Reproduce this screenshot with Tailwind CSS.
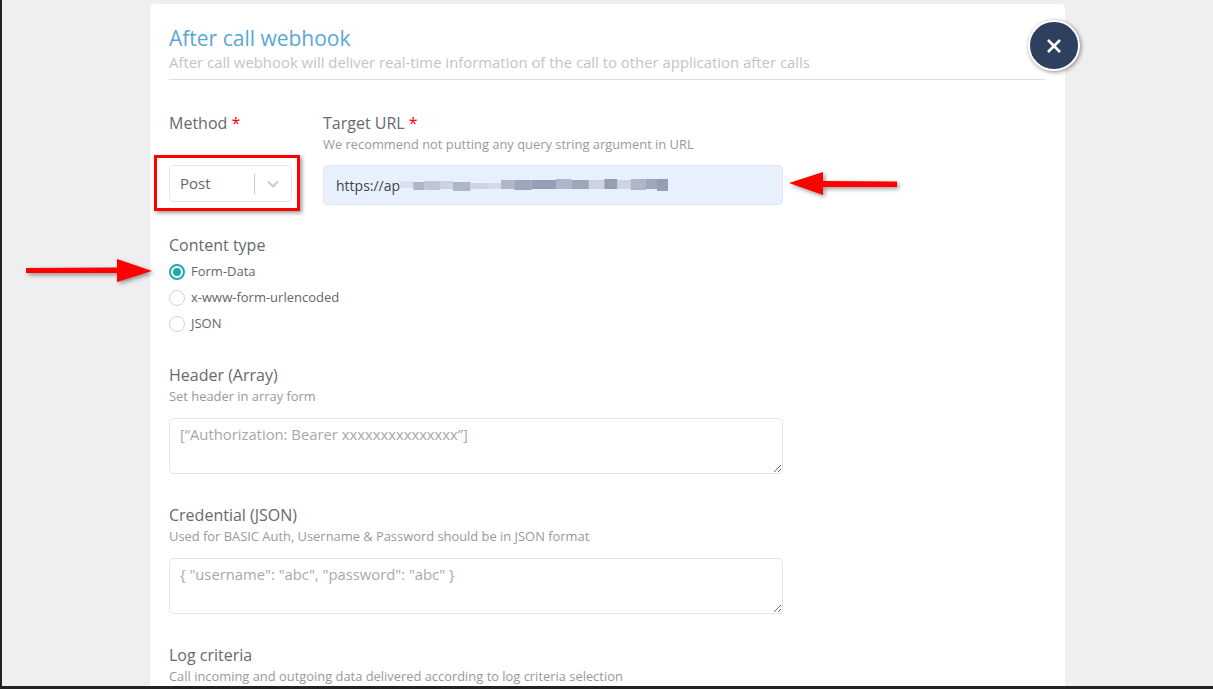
<!DOCTYPE html>
<html lang="en">
<head>
<meta charset="UTF-8">
<title>After call webhook</title>
<script src="https://cdn.jsdelivr.net/npm/@tailwindcss/browser@4"></script>
</head>
<body class="bg-[#efefef]">
<div class="relative h-[689px] w-[1213px] overflow-hidden border-b-[3px] border-l-2 border-[#222222] bg-[#efefef] font-['Open_Sans',sans-serif] text-[#676a6c]">

  <!-- modal -->
  <div class="ml-[148px] mt-1 h-[800px] w-[915px] rounded-t bg-white pl-[19px] pr-[20px] pt-[21px]">
    <h2 class="text-[21px] leading-[27px] text-[#5aa7d6]">After call webhook</h2>
    <p class="border-b border-[#e0e0e0] pb-[6px] text-[14.9px] leading-[21px] text-[#c4c4c4]">After call webhook will deliver real-time information of the call to other application after calls</p>

    <div class="mt-[32px] flex">
      <div class="w-[154px]">
        <div class="text-[16px] leading-[22px]">Method <span class="text-[#f00]">*</span></div>
        <div class="mt-[31px] flex h-[37px] w-[123px] items-center rounded border border-[#e6e6e6] pl-[10px] text-[15px] text-[#666666]">
          <span class="flex-1">Post</span>
          <span class="h-[20px] w-px bg-[#cccccc]"></span>
          <svg class="mx-[11px] h-[14px] w-[14px] text-[#cccccc]" viewBox="0 0 14 14" fill="none" stroke="currentColor" stroke-width="2"><path d="M2 4.5l5 5 5-5"/></svg>
        </div>
      </div>
      <div>
        <div class="text-[16px] leading-[22px]">Target URL <span class="text-[#f00]">*</span></div>
        <div class="text-[12.9px] leading-[21px] text-[#999999]">We recommend not putting any query string argument in URL</div>
        <div class="mt-[10px] flex h-[40px] w-[460px] items-center rounded border border-[#dfe6f2] bg-[#e8f0fe] pl-[12px] text-[14px] text-[#444444]">
          <span>https://ap</span>
          <svg class="h-[16px] w-[268px] shrink-0 opacity-80 blur-[0.6px]" viewBox="0 0 244 16" preserveAspectRatio="none">
            <g fill="#9fa9bb">
              <rect x="0" y="4" width="12" height="7" fill="#d8dde6"/><rect x="12" y="5" width="10" height="8"/><rect x="22" y="4" width="15" height="9" fill="#b4bccb"/><rect x="37" y="4" width="11" height="8" fill="#c7cedb"/><rect x="48" y="5" width="16" height="9"/><rect x="64" y="6" width="16" height="6" fill="#c7cedb"/><rect x="80" y="6" width="12" height="6" fill="#d0d6e1"/><rect x="92" y="3" width="12" height="9"/><rect x="104" y="3" width="16" height="10" fill="#8b96aa"/><rect x="120" y="3" width="22" height="9" fill="#7f8ba1"/><rect x="142" y="2" width="14" height="10"/><rect x="156" y="3" width="16" height="9" fill="#8b96aa"/><rect x="172" y="3" width="14" height="9" fill="#c7cedb"/><rect x="186" y="2" width="12" height="10" fill="#7f8ba1"/><rect x="198" y="3" width="12" height="9" fill="#c7cedb"/><rect x="210" y="2" width="14" height="11"/><rect x="224" y="2" width="10" height="10" fill="#8b96aa"/><rect x="234" y="2" width="10" height="12" fill="#7f8ba1"/>
            </g>
          </svg>
        </div>
      </div>
    </div>

    <div class="mt-[29px] text-[16px] leading-[22px]">Content type</div>
    <div class="mt-[6px] flex flex-col gap-[6px] text-[13px] text-[#666666]">
      <label class="flex h-[20px] items-center gap-[6px]">
        <span class="flex h-[16px] w-[16px] items-center justify-center rounded-full border-2 border-[#1ea7b5]"><span class="h-[8px] w-[8px] rounded-full bg-[#1ea7b5]"></span></span>Form-Data
      </label>
      <label class="flex h-[20px] items-center gap-[6px]"><span class="h-[16px] w-[16px] rounded-full border border-[#d4d4d4]"></span>x-www-form-urlencoded</label>
      <label class="flex h-[20px] items-center gap-[6px]"><span class="h-[16px] w-[16px] rounded-full border border-[#d4d4d4]"></span>JSON</label>
    </div>

    <div class="mt-[30px] text-[16px] leading-[22px]">Header (Array)</div>
    <div class="text-[12.9px] leading-[20px] text-[#999999]">Set header in array form</div>
    <textarea class="mt-[12px] block h-[56px] w-[614px] rounded border border-[#e6e6e6] px-[10px] py-[4px] text-[14.8px] placeholder:text-[#a8a8a8]" placeholder="[“Authorization: Bearer xxxxxxxxxxxxxxx”]"></textarea>

    <div class="mt-[30px] text-[16px] leading-[22px]">Credential (JSON)</div>
    <div class="text-[12.9px] leading-[20px] text-[#999999]">Used for BASIC Auth, Username &amp; Password should be in JSON format</div>
    <textarea class="mt-[12px] block h-[56px] w-[614px] rounded border border-[#e6e6e6] px-[10px] py-[4px] text-[14.8px] placeholder:text-[#a8a8a8]" placeholder="{ &quot;username&quot;: &quot;abc&quot;, &quot;password&quot;: &quot;abc&quot; }"></textarea>

    <div class="mt-[30px] text-[16px] leading-[22px]">Log criteria</div>
    <div class="text-[12.9px] leading-[20px] text-[#999999]">Call incoming and outgoing data delivered according to log criteria selection</div>
  </div>

  <!-- close button -->
  <button class="absolute left-[1026px] top-[20px] flex h-[51px] w-[52px] items-center justify-center rounded-full border-2 border-white bg-[#2f405e] shadow-[1px_1px_4px_rgba(0,0,0,0.45)]">
    <svg class="h-[16px] w-[16px]" viewBox="0 0 16 16" fill="none" stroke="white" stroke-width="2.6"><path d="M2 2l12 12M14 2L2 14"/></svg>
  </button>

  <!-- annotations -->
  <div class="absolute left-[152px] top-[155px] h-[56px] w-[146px] border-[3px] border-[#f00] shadow-[2px_2px_4px_rgba(0,0,0,0.4)]"></div>
  <svg class="absolute left-[787px] top-[170px] h-[30px] w-[115px] drop-shadow-[2px_2px_2px_rgba(0,0,0,0.4)]" viewBox="0 0 115 30"><path fill="#f00" d="M0 13L34 2V11L108 11.5V17L34 17V25Z"/></svg>
  <svg class="absolute left-[22px] top-[257px] h-[30px] w-[135px] drop-shadow-[2px_2px_2px_rgba(0,0,0,0.4)]" viewBox="0 0 135 30"><path fill="#f00" d="M2 11L93 10.5V2L128 14L93 25V16L2 16Z"/></svg>
</div>
</body>
</html>
